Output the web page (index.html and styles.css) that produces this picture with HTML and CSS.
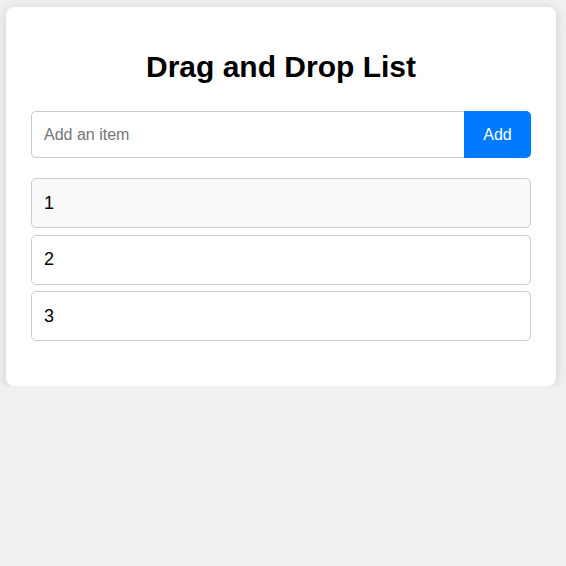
FILE: index.html
```html
<!DOCTYPE html>
<html>
<head>
<meta charset="utf-8">
<link rel="stylesheet" href="styles.css">
</head>
<body>
<div class="card">
  <h1 class="title">Drag and Drop List</h1>
  <div class="add-row">
    <input class="add-input" type="text" placeholder="Add an item">
    <button class="add-btn">Add</button>
  </div>
  <ul class="list">
    <li class="item item-hover" draggable="true">1</li>
    <li class="item" draggable="true">2</li>
    <li class="item" draggable="true">3</li>
  </ul>
</div>
</body>
</html>
```
FILE: styles.css
```css
html, body {
  margin: 0;
  background: #f0f0f0;
  font-family: "Liberation Sans", Arial, sans-serif;
}
body {
  padding: 7px 10px 0 6px;
}
.card {
  width: 550px;
  box-sizing: border-box;
  background: #fff;
  border-radius: 8px;
  box-shadow: 0 2px 12px rgba(0, 0, 0, 0.14);
  padding: 25px 25px 25px 25px;
}
.title {
  margin: 18px 0 27px;
  text-align: center;
  font-size: 30px;
  font-weight: bold;
  color: #000;
}
.add-row {
  display: flex;
}
.add-input {
  flex: 1;
  min-width: 0;
  font-family: inherit;
  font-size: 16px;
  padding: 13.5px 12px;
  border: 1px solid #ccc;
  border-right: none;
  border-radius: 5px 0 0 5px;
  outline: none;
  color: #333;
}
.add-input::placeholder {
  color: #757575;
}
.add-btn {
  font-family: inherit;
  font-size: 16px;
  width: 67px;
  border: none;
  background: #007bff;
  color: #fff;
  border-radius: 0 5px 5px 0;
  cursor: pointer;
}
.list {
  list-style: none;
  margin: 20px 0 20px;
  padding: 0;
  display: flex;
  flex-direction: column;
  gap: 6.5px;
}
.item {
  border: 1px solid #ccc;
  border-radius: 5px;
  padding: 13.5px 12px;
  font-size: 18px;
  color: #000;
  background: #fff;
}
.item-hover {
  background: #f9f9f9;
}
```
